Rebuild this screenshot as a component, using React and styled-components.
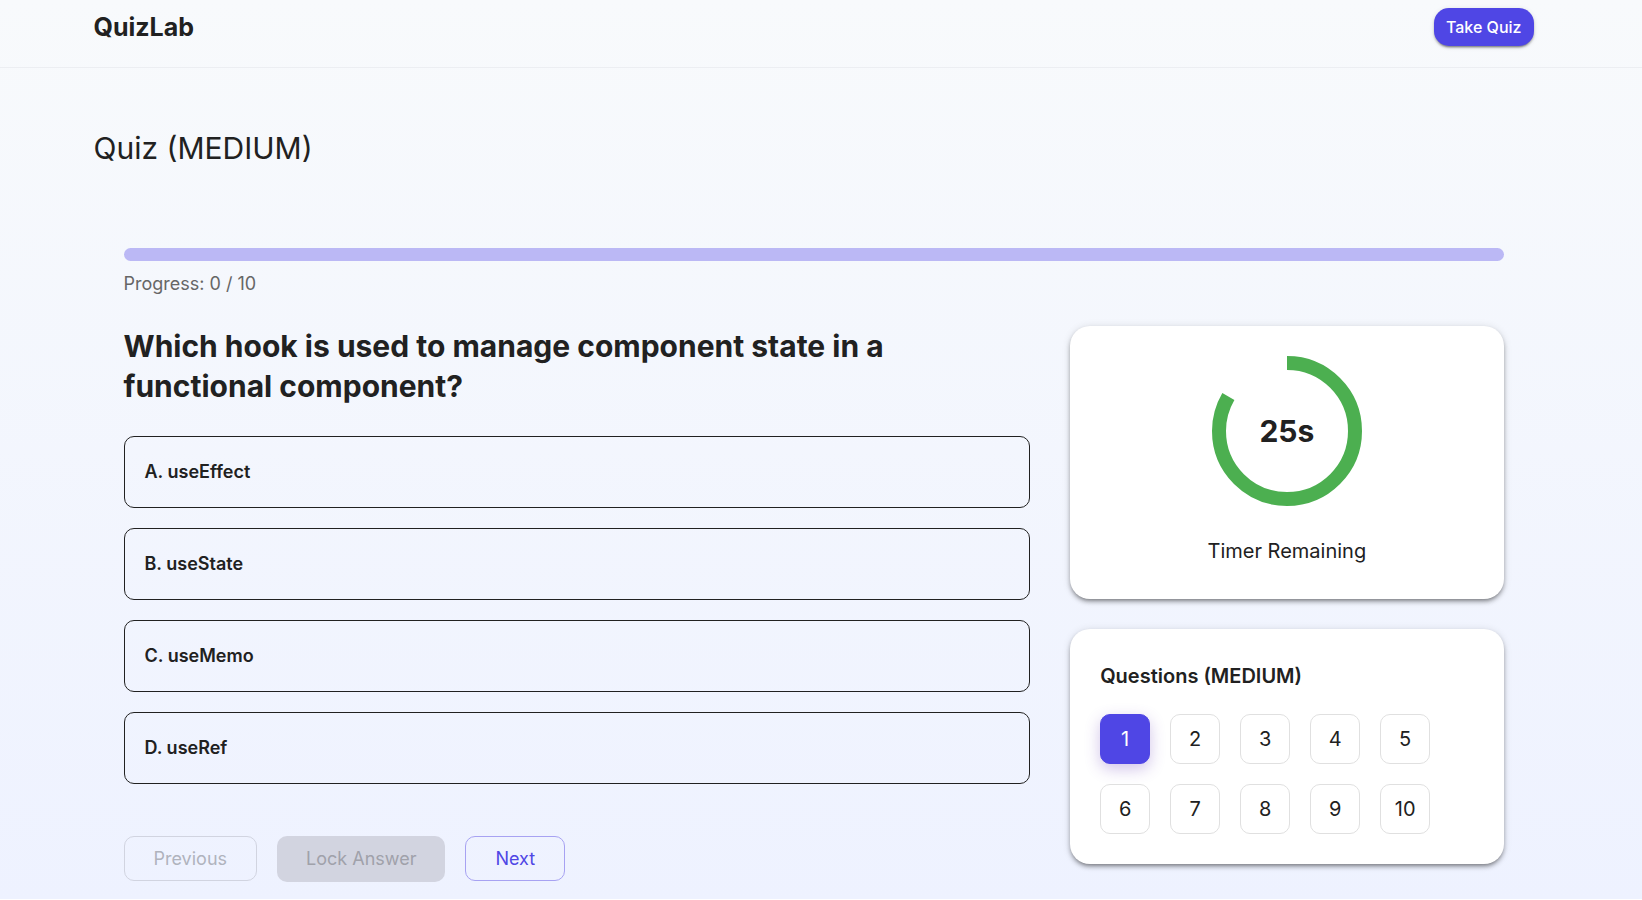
import React, { useState } from "react";
import styled, { createGlobalStyle } from "styled-components";

const GlobalStyle = createGlobalStyle`
  *, *::before, *::after { box-sizing: border-box; }
  html { background: #fff; }
  body {
    margin: 0;
    color: #212121;
    font-family: Inter, "Liberation Sans", sans-serif;
    font-size: 18px;
    line-height: 24px;
  }
  button { font: inherit; cursor: pointer; }
  button:disabled { cursor: default; }
`;

const Page = styled.div`
  min-height: calc(100vh - 1px);
  padding-right: 15px;
  background: linear-gradient(180deg, #f8fafc 0%, #eef2ff 100%);
`;

const TopBar = styled.header`
  margin-right: -15px;
  padding-right: 15px;
  border-bottom: 1px solid #eceef2;
`;

const Container = styled.div`
  width: 100%;
  max-width: 1500px;
  margin: 0 auto;
  padding: 0 30px;
`;

const Toolbar = styled(Container)`
  display: flex;
  align-items: flex-start;
  justify-content: space-between;
  padding-top: 8px;
  padding-bottom: 21px;
`;

const Brand = styled.a`
  color: inherit;
  font-size: 25px;
  font-weight: 700;
  line-height: 38px;
  text-decoration: none;
`;

const TakeQuiz = styled.button`
  height: 38px;
  padding: 0 12px;
  border: 0;
  border-radius: 15px;
  background: #4f46e5;
  color: #fff;
  font-size: 16px;
  font-weight: 500;
  box-shadow: 0 3px 1px -2px rgba(0, 0, 0, 0.2), 0 2px 2px rgba(0, 0, 0, 0.24), 0 1px 5px rgba(0, 0, 0, 0.12);
`;

const Title = styled.h1`
  margin: 60px 0;
  font-size: 30px;
  font-weight: 400;
  line-height: 40px;
`;

const Quiz = styled.main`
  padding: 20px 30px 17px;
`;

const ProgressTrack = styled.div`
  height: 13px;
  border-radius: 8px;
  overflow: hidden;
  background: #bbb8f5;
`;

const ProgressFill = styled.div`
  height: 100%;
  background: #4f46e5;
`;

const ProgressText = styled.p`
  margin: 11px 0 30px;
  color: #666;
`;

const Columns = styled.div`
  display: grid;
  grid-template-columns: repeat(12, minmax(0, 1fr));
  column-gap: 40px;
`;

const QuestionColumn = styled.section`
  grid-column: span 8;
`;

const SideColumn = styled.aside`
  grid-column: span 4;
  display: flex;
  flex-direction: column;
  align-items: stretch;
  gap: 30px;
`;

const Question = styled.h2`
  margin: 0 0 30px;
  font-size: 30px;
  font-weight: 700;
  line-height: 40px;
`;

const Options = styled.div`
  display: flex;
  flex-direction: column;
  gap: 20px;
`;

const Option = styled.button`
  min-height: 72px;
  padding: 0 20px;
  border: 1px solid #212121;
  border-radius: 10px;
  background: ${(p) => (p.$selected ? "#e0e0fb" : "transparent")};
  color: inherit;
  font-weight: 600;
  text-align: left;
`;

const Actions = styled.div`
  display: flex;
  align-items: flex-start;
  gap: 20px;
  margin-top: 52px;
`;

const OutlineButton = styled.button`
  height: 45px;
  padding: 0 29px;
  border: 1px solid #a7a2f2;
  border-radius: 10px;
  background: transparent;
  color: #4f46e5;

  &:disabled {
    border-color: #d1d4e0;
    color: #b0b3bd;
  }
`;

const LockButton = styled.button`
  height: 46px;
  padding: 0 29px;
  border: 0;
  border-radius: 10px;
  background: #4f46e5;
  color: #fff;

  &:disabled {
    background: #d2d4e0;
    color: #a0a1aa;
  }
`;

const Card = styled.section`
  padding: 30px;
  border-radius: 20px;
  background: #fff;
  box-shadow: 0 3px 3px -2px rgba(0, 0, 0, 0.2), 0 3px 4px rgba(0, 0, 0, 0.28), 0 1px 8px rgba(0, 0, 0, 0.12);
`;

const TimerCard = styled(Card)`
  display: flex;
  flex-direction: column;
  align-items: center;
  gap: 30px;
`;

const Dial = styled.div`
  display: grid;
  place-items: center;

  > * { grid-area: 1 / 1; }
`;

const Seconds = styled.span`
  font-size: 30px;
  font-weight: 700;
  line-height: 40px;
`;

const TimerLabel = styled.p`
  margin: 0 0 3px;
  font-size: 20px;
  line-height: 30px;
`;

const CardTitle = styled.h3`
  margin: 2px 0 23px;
  font-size: 20px;
  font-weight: 600;
  line-height: 30px;
`;

const NumberGrid = styled.div`
  display: grid;
  grid-template-columns: repeat(5, 50px);
  gap: 20px;
`;

const NumberButton = styled.button`
  height: 50px;
  padding: 0;
  border: 1px solid ${(p) => (p.$current ? "#4f46e5" : "#e0e0e0")};
  border-radius: 10px;
  background: ${(p) => (p.$current ? "#4f46e5" : "#fff")};
  color: ${(p) => (p.$current ? "#fff" : "#212121")};
  font-size: 20px;
  box-shadow: ${(p) => (p.$current ? "0 5px 15px rgba(103, 58, 183, 0.3)" : "none")};
`;

const RADIUS = 68;
const LENGTH = 2 * Math.PI * RADIUS;

function TimerDial({ left, total }) {
  return (
    <Dial role="timer">
      <svg width="150" height="150" viewBox="0 0 150 150" aria-hidden="true">
        <circle
          cx="75"
          cy="75"
          r={RADIUS}
          fill="none"
          stroke="#4caf50"
          strokeWidth="14"
          strokeDasharray={`${(LENGTH * left) / total} ${LENGTH}`}
          transform="rotate(-90 75 75)"
        />
      </svg>
      <Seconds>{left}s</Seconds>
    </Dial>
  );
}

const ANSWERS = ["A. useEffect", "B. useState", "C. useMemo", "D. useRef"];
const NUMBERS = [1, 2, 3, 4, 5, 6, 7, 8, 9, 10];

export default function App() {
  const [answer, setAnswer] = useState(null);
  const [current, setCurrent] = useState(1);
  const done = 0;

  return (
    <>
      <GlobalStyle />
      <Page>
        <TopBar>
          <Toolbar>
            <Brand href="#">QuizLab</Brand>
            <TakeQuiz type="button">Take Quiz</TakeQuiz>
          </Toolbar>
        </TopBar>
        <Container>
          <Title>Quiz (MEDIUM)</Title>
          <Quiz>
            <ProgressTrack role="progressbar" aria-valuenow={done} aria-valuemin={0} aria-valuemax={10} aria-label="Progress">
              <ProgressFill style={{ width: `${done * 10}%` }} />
            </ProgressTrack>
            <ProgressText>Progress: {done} / 10</ProgressText>
            <Columns>
              <QuestionColumn>
                <Question>Which hook is used to manage component state in a functional component?</Question>
                <Options>
                  {ANSWERS.map((text) => (
                    <Option key={text} type="button" $selected={answer === text} onClick={() => setAnswer(text)}>
                      {text}
                    </Option>
                  ))}
                </Options>
                <Actions>
                  <OutlineButton type="button" disabled={current === 1} onClick={() => setCurrent(current - 1)}>
                    Previous
                  </OutlineButton>
                  <LockButton type="button" disabled={answer === null}>Lock Answer</LockButton>
                  <OutlineButton type="button" disabled={current === 10} onClick={() => setCurrent(current + 1)}>
                    Next
                  </OutlineButton>
                </Actions>
              </QuestionColumn>
              <SideColumn>
                <TimerCard>
                  <TimerDial left={25} total={30} />
                  <TimerLabel>Timer Remaining</TimerLabel>
                </TimerCard>
                <Card>
                  <CardTitle>Questions (MEDIUM)</CardTitle>
                  <NumberGrid>
                    {NUMBERS.map((n) => (
                      <NumberButton key={n} type="button" $current={n === current} onClick={() => setCurrent(n)}>
                        {n}
                      </NumberButton>
                    ))}
                  </NumberGrid>
                </Card>
              </SideColumn>
            </Columns>
          </Quiz>
        </Container>
      </Page>
    </>
  );
}
